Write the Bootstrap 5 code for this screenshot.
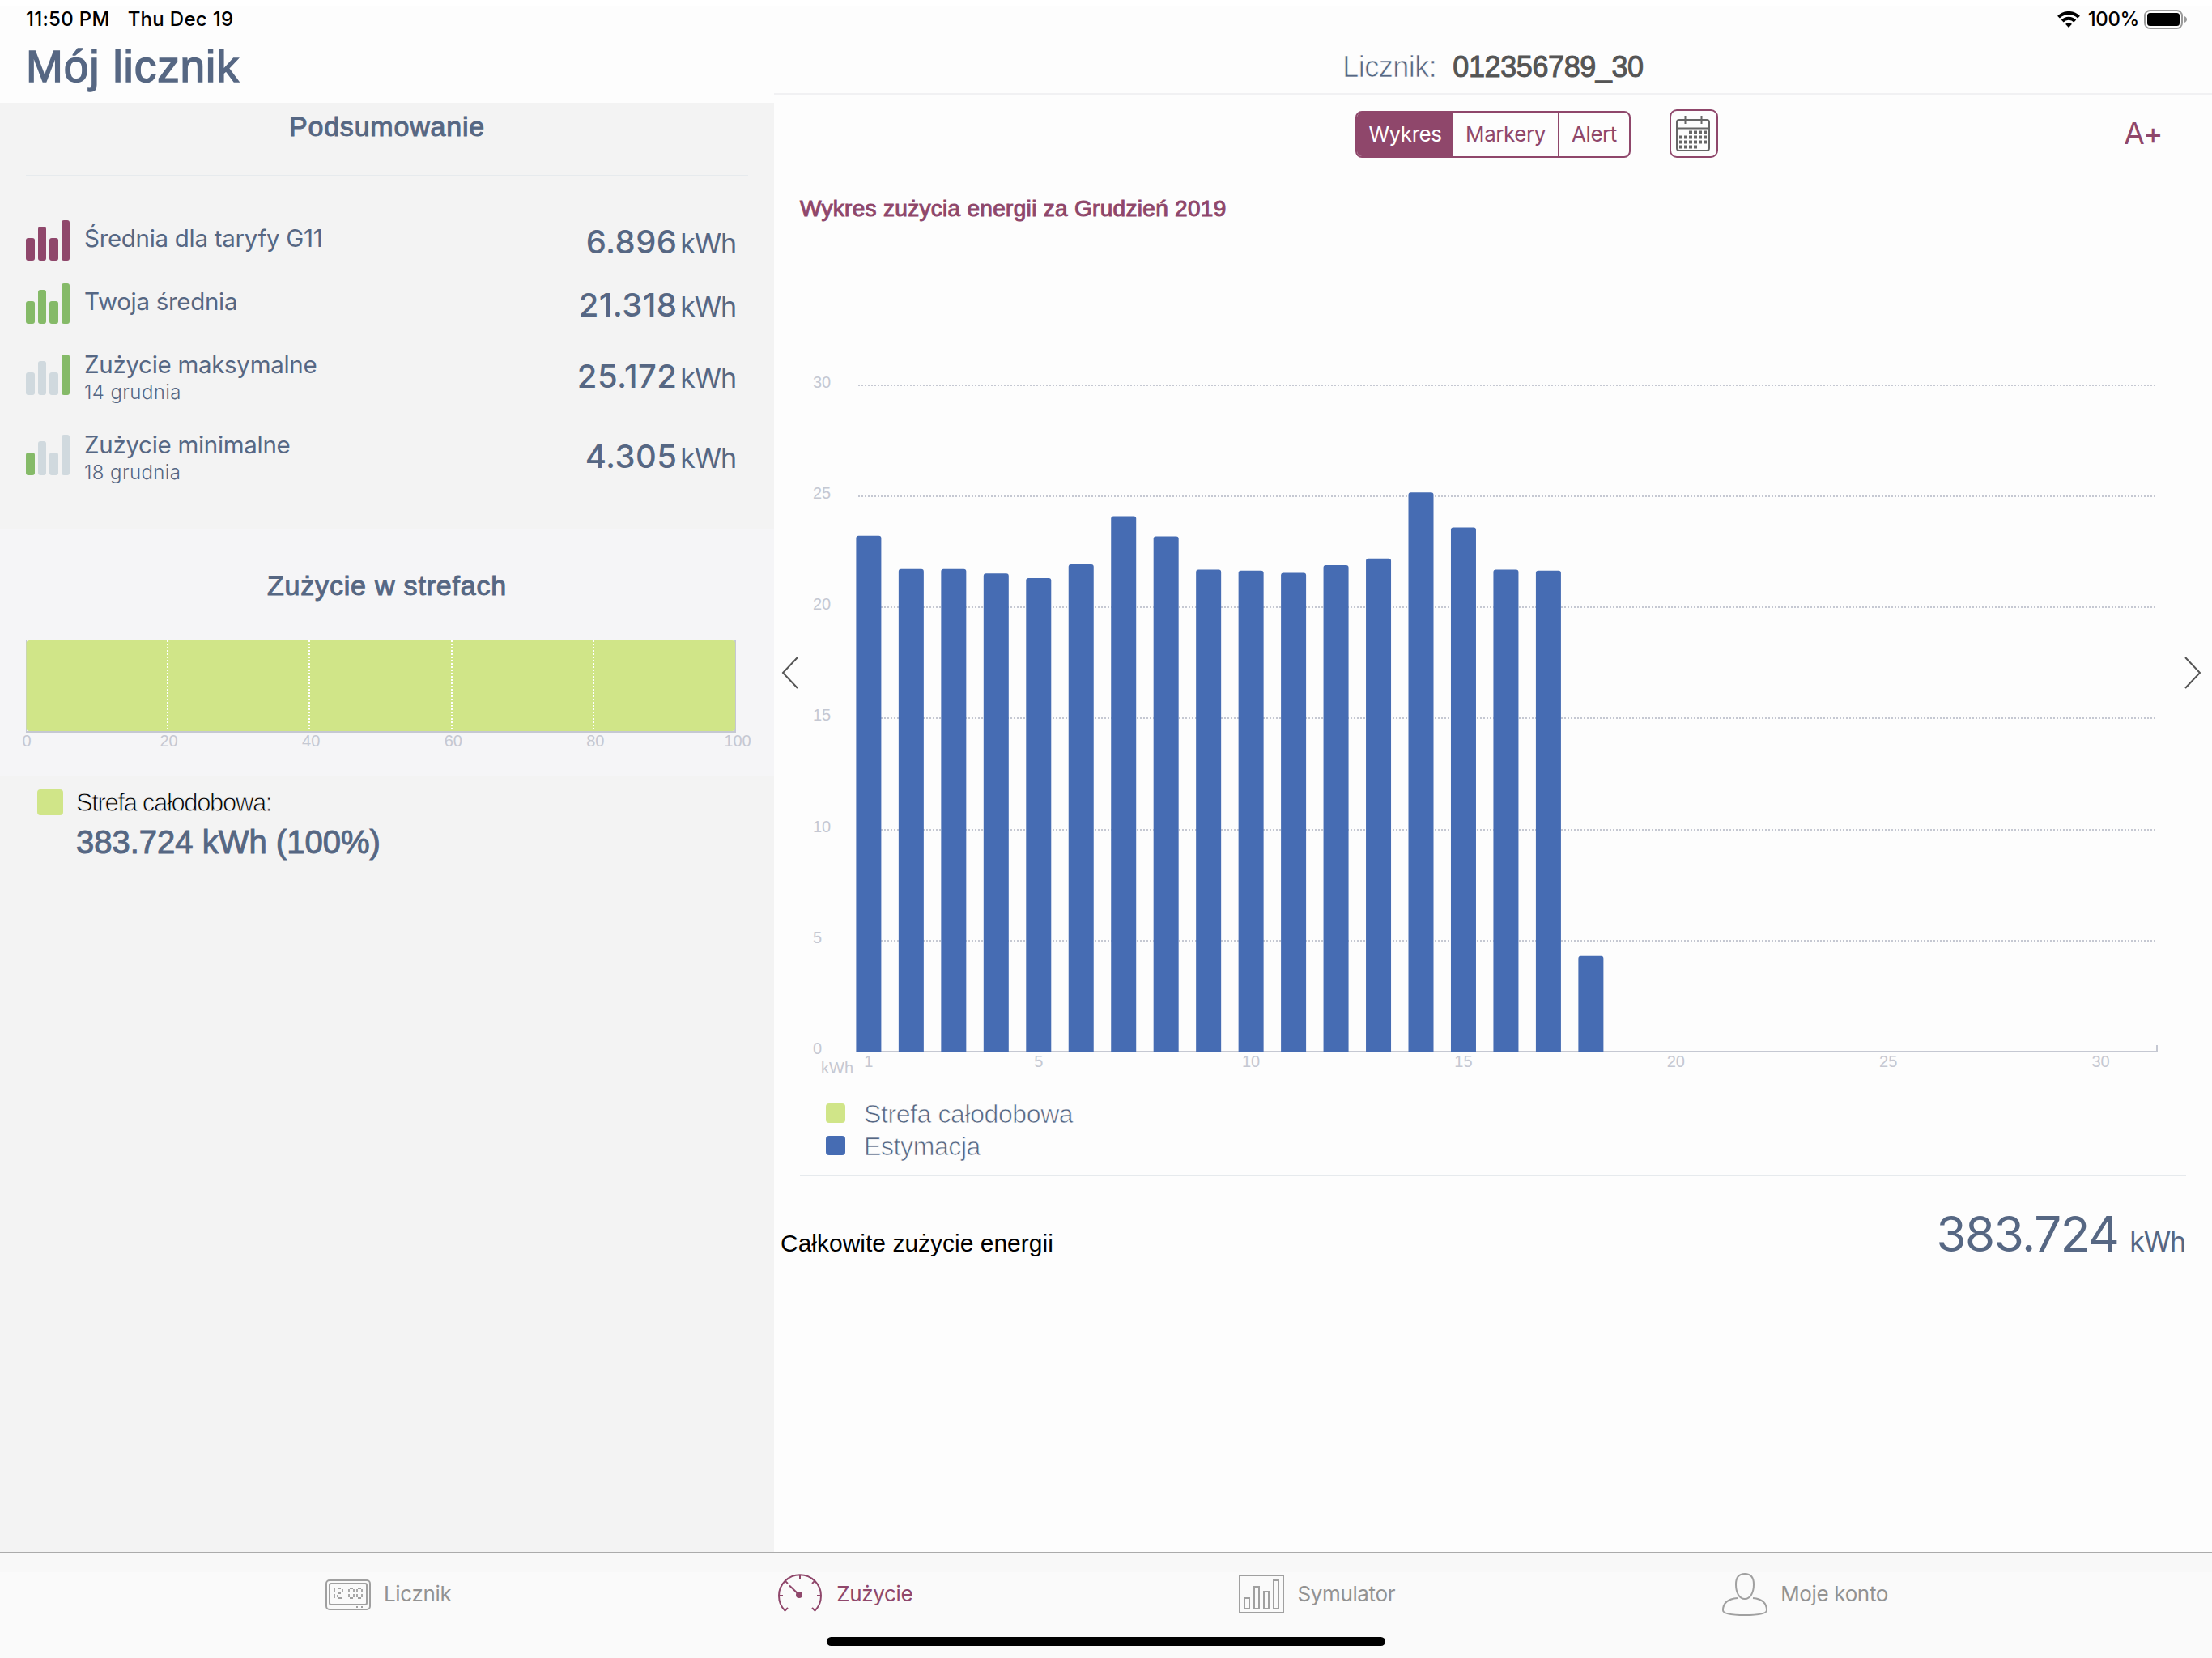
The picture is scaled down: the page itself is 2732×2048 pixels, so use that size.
<!DOCTYPE html>
<html lang="pl">

<head>
    <meta charset="UTF-8">
    <meta name="viewport" content="width=device-width, initial-scale=1.0">
    <title>Mój licznik</title>
    <link href="https://cdn.jsdelivr.net/npm/bootstrap@5.3.0/dist/css/bootstrap.min.css" rel="stylesheet">
    <style>
        body { width: 2732px; height: 2048px; overflow: hidden; background: #fdfdfd; color: #566783; font-family: "Liberation Sans", Arial, sans-serif; }
        .sf { font-family: Inter, sans-serif; }
        .semi { -webkit-text-stroke: 1px currentColor; }
        .thin { -webkit-text-stroke: .7px #fdfdfd; }
        .plum { color: #8f476b; }
        .status-bar { height: 40px; padding: 7px 30px 0 32px; background: linear-gradient(#fff 8px, #fdfdfd 8px); color: #000; font-size: 24px; line-height: 34px; font-weight: 500; letter-spacing: .3px; }
        .side { width: 956px; background: #f3f3f3; }
        .side-head { height: 87px; background: #fdfdfd; padding-left: 32px; font-size: 55px; line-height: 85px; letter-spacing: .9px; }
        .side-head .semi { -webkit-text-stroke-width: 1.5px; }
        .rule { height: 2px; background: #e6eaed; }
        .summary { height: 527px; padding: 0 32px; }
        .sub-title { font-size: 34px; line-height: 58px; text-align: center; letter-spacing: .8px; }
        .stat { height: 50px; margin-right: 15px; }
        .stat-name { font-size: 29.5px; line-height: 44px; padding-left: 18px; letter-spacing: -.3px; }
        .two-line .stat-name { line-height: 24px; }
        .stat-date { font-size: 24px; line-height: 45px; padding-left: 18px; font-weight: 300; letter-spacing: .4px; }
        .stat-val { font-size: 40px; line-height: 53px; font-weight: 500; letter-spacing: .4px; }
        .unit { font-size: 34px; font-weight: 400; letter-spacing: -1.2px; }
        .zones { height: 305px; background: #f5f5f7; padding: 49px 47px 0 32px; }
        .zones .sub-title { line-height: 40px; margin-right: -15px; }
        .zone-axis { margin: 0 -22px 0 -19px; font-size: 20px; line-height: 20px; color: #c5c8d2; }
        .zone-axis span { width: 40px; text-align: center; }
        .swatch { border-radius: 4px; background: #d0e588; }
        .swatch-lg { width: 32px; height: 32px; }
        .swatch-sm { width: 24px; height: 24px; }
        .swatch.est { background: #466cb3; }
        .zone-name { height: 32px; font-size: 31px; line-height: 34px; color: #000; letter-spacing: -1.35px; -webkit-text-stroke: .8px #f3f3f3; }
        .zone-sum { font-size: 40px; line-height: 50px; padding-left: 94px; }
        .meter { height: 77px; padding-top: 10px; font-size: 36px; line-height: 65px; border-bottom: 2px solid #f1f1f3; gap: 20px; }
        .meter-no { color: #555; letter-spacing: -.4px; }
        .toolbar { height: 78px; padding: 18px 61px 0 718px; }
        .seg { height: 58px; width: 340px; border: 2px solid #8f476b; border-radius: 8px; overflow: hidden; font-size: 26px; letter-spacing: -.45px; margin-top: 2px; }
        .seg span { line-height: 54px; text-align: center; }
        .seg .on { background: #8f476b; color: #fff; width: 119px; }
        .seg .mid { width: 131px; border-right: 2px solid #8f476b; }
        .cal { width: 60px; height: 60px; border: 2px solid #8f476b; border-radius: 9px; margin-left: 48px; }
        .font-up { font-size: 37px; line-height: 60px; letter-spacing: -.5px; }
        .chart-title { font-size: 28px; line-height: 40px; margin: 43px 0 0 32px; letter-spacing: .3px; }
        .chart-area { margin: 160px 0 23px; }
        .legend-row { height: 24px; padding-left: 64px; gap: 23px; font-size: 32px; line-height: 26px; letter-spacing: -.4px; }
        .total { margin-top: 31px; padding: 0 33px 0 8px; line-height: 80px; font-size: 30px; }
        .total-label { color: #000; }
        .total-val { font-size: 60px; letter-spacing: -1.4px; }
        .arrow { position: absolute; top: 771px; }
        .tabs { height: 131px; border-top: 1px solid #ababab; background: linear-gradient(#f8f8f8 24px, #fafafa 24px); font-size: 26px; letter-spacing: -.35px; padding-top: 24px; }
        .tabs a { height: 55px; line-height: 54px; color: #929292; text-decoration: none; }
        .tabs a.active { color: #8f476b; }
        .home-bar { width: 690px; height: 11px; border-radius: 6px; background: #000; margin: 25px 0 0 1021px; }
    </style>
</head>

<body class="d-flex flex-column">
    <header class="status-bar sf d-flex">
        <span>11:50 PM</span>
        <span style="margin-left:22px">Thu Dec 19</span>
        <span class="ms-auto d-flex">
            <svg width="28" height="20" viewBox="0 0 28 20" style="margin:7px 10px 0 0" fill="none" stroke="#000" stroke-width="4">
                <path d="M1.500 7.200a17.500 17.500 0 0 1 25 0"/><path d="M6.200 12a11 11 0 0 1 15.600 0"/><path d="M14 20l-4-4.200a6 6 0 0 1 8 0z" fill="#000" stroke="none"/>
            </svg>
            <span style="letter-spacing:-.4px">100%</span>
            <svg width="54" height="24" viewBox="0 0 54 24" style="margin:5px 0 0 6px">
                <rect x="1" y="1" width="46" height="22" rx="6.500" fill="none" stroke="#9a9a9a" stroke-width="2"/>
                <rect x="4" y="4" width="40" height="16" rx="3.500"/><path d="M50 8c4 1.500 4 6.500 0 8z" fill="#9a9a9a"/>
            </svg>
        </span>
    </header>

    <main class="d-flex flex-grow-1">
        <aside class="side d-flex flex-column">
            <div class="side-head"><span class="semi">Mój licznik</span></div>
            <section class="summary">
                <div class="sub-title"><span class="semi">Podsumowanie</span></div>
                <div class="rule" style="margin-top:31px"></div>
                <div id="stats" class="sf"></div>
            </section>
            <section class="zones">
                <div class="sub-title"><span class="semi">Zużycie w strefach</span></div>
                <svg class="d-block" style="margin-top:48px" width="877" height="114">
                    <path d="M0 0V113H876V0" fill="none" stroke="#c5c8d2" stroke-width="2"/>
                    <rect x="0.500" width="875.500" height="112" rx="4" fill="#d0e588"/>
                    <path d="M175 0V112M350 0V112M526 0V112M701 0V112" stroke="#fff" stroke-width="2" stroke-dasharray="2 2"/>
                </svg>
                <div class="zone-axis d-flex justify-content-between"><span>0</span><span>20</span><span>40</span><span>60</span><span>80</span><span>100</span></div>
            </section>
            <section class="pt-3">
                <div class="d-flex" style="padding-left:46px;gap:16px"><span class="swatch swatch-lg"></span><span class="zone-name">Strefa całodobowa:</span></div>
                <div class="zone-sum mt-2"><span class="semi">383.724 kWh (100%)</span></div>
            </section>
        </aside>

        <section class="flex-grow-1 position-relative">
            <div class="meter d-flex justify-content-center">
                <span class="thin" style="letter-spacing:-.5px">Licznik:</span>
                <span class="meter-no semi">012356789_30</span>
            </div>
            <div class="toolbar d-flex">
                <div class="seg sf d-flex plum">
                    <span class="on">Wykres</span>
                    <span class="mid">Markery</span>
                    <span class="flex-fill">Alert</span>
                </div>
                <div class="cal">
                    <svg class="d-block" width="56" height="56" viewBox="0 0 56 56" fill="none" stroke="#666" stroke-width="2">
                        <rect x="7" y="11" width="40" height="38" rx="3"/><path d="M7 21.500H47M17.500 6V16M37.500 6V16"/>
                        <path d="M22 26.500H46M10 32.500H46M10 38.500H46M10 44.500H34" stroke-width="4" stroke-dasharray="4 2"/>
                    </svg>
                </div>
                <span class="font-up ms-auto sf plum">A+</span>
            </div>
            <div class="chart-title plum"><span class="semi">Wykres zużycia energii za Grudzień 2019</span></div>
            <svg id="chart" class="chart-area d-block" width="1776" height="902" font-size="20"></svg>
            <div class="legend-row d-flex"><span class="swatch swatch-sm"></span><span class="thin">Strefa całodobowa</span></div>
            <div class="legend-row d-flex mt-3"><span class="swatch swatch-sm est"></span><span class="thin">Estymacja</span></div>
            <div class="rule" style="margin:24px 32px 0"></div>
            <div class="total d-flex align-items-baseline">
                <span class="total-label">Całkowite zużycie energii</span>
                <span class="total-val ms-auto sf">383.724</span>
                <span class="sf unit" style="margin-left:14px">kWh</span>
            </div>
            <svg class="arrow" style="left:8px" width="24" height="40" fill="none" stroke="#555" stroke-width="2"><path d="M21 1L3 20L21 39"/></svg>
            <svg class="arrow" style="right:12px" width="24" height="40" fill="none" stroke="#555" stroke-width="2"><path d="M3 1L21 20L3 39"/></svg>
        </section>
    </main>

    <footer class="tabs sf">
        <nav class="d-flex p-0">
            <a href="#" class="d-flex" style="margin-left:402px">
                <svg width="56" height="38" viewBox="0 0 56 38" style="margin:9px 16px 0 0" fill="none" stroke="#a0a0a0" stroke-width="2">
                    <rect x="1" y="1" width="54" height="36" rx="4"/><rect x="5" y="5" width="46" height="26" rx="2"/>
                    <path d="M11 11V16M11 18V23M15 11H19M21 12V16M15 17H19M15 19V22M16 23H21M30 11H34M29 12V16M35 12V16M29 18V22M35 18V22M30 23H34M40 11H44M39 12V16M45 12V16M39 18V22M45 18V22M40 23H44" stroke-width="1.800"/>
                    <path d="M38 34H40M44 34H46"/>
                </svg>
                <span>Licznik</span>
            </a>
            <a href="#" class="d-flex active" style="margin-left:404px">
                <svg width="54" height="48" viewBox="0 0 54 48" style="margin:2px 18px 0 0" fill="none" stroke="#8f476b" stroke-width="2">
                    <path d="M8.500 45.500A26 26 0 1 1 45.500 45.500M8.500 45.500L12 42M45.500 45.500L42 42M1 27H6M53 27H48M27 1V6M8.600 8.600L12 12M45.400 8.600L42 12"/>
                    <path d="M14 14.500L26 26"/><circle cx="26" cy="26" r="4" fill="#8f476b" stroke="none"/>
                </svg>
                <span>Zużycie</span>
            </a>
            <a href="#" class="d-flex" style="margin-left:403px">
                <svg width="56" height="48" viewBox="0 0 56 48" style="margin:3px 16px 0 0" fill="none" stroke="#a0a0a0" stroke-width="2">
                    <path d="M1 1H55V47H1zM7 29H13V42H7zM19 15H25V42H19zM31 21H37V42H31zM43 7H49V42H43z"/>
                </svg>
                <span>Symulator</span>
            </a>
            <a href="#" class="d-flex" style="margin-left:404px">
                <svg width="56" height="53" viewBox="0 0 56 53" style="margin:1px 16px 0 0" fill="none" stroke="#a0a0a0" stroke-width="2">
                    <path d="M28 1C20 1 17 6 17 14C17 24 21 32 28 32S39 24 39 14C39 6 36 1 28 1z"/>
                    <path d="M19 31C7 32 1 37 1 46C1 50 10 52 28 52S55 50 55 46C55 37 49 32 38 31"/>
                </svg>
                <span>Moje konto</span>
            </a>
        </nav>
        <div class="home-bar"></div>
    </footer>

    <script src="https://cdn.jsdelivr.net/npm/bootstrap@5.3.0/dist/js/bootstrap.bundle.min.js"></script>
    <script>
        const GREEN = '#85ba68', GREY = '#d0d9de', PLUM = '#8f476b';

        // summary rows
        const stats = [
            { name: 'Średnia dla taryfy G11', value: '6.896', top: 54, colors: [PLUM, PLUM, PLUM, PLUM] },
            { name: 'Twoja średnia', value: '21.318', top: 28, colors: [GREEN, GREEN, GREEN, GREEN] },
            { name: 'Zużycie maksymalne', date: '14 grudnia', value: '25.172', top: 38, colors: [GREY, GREY, GREY, GREEN] },
            { name: 'Zużycie minimalne', date: '18 grudnia', value: '4.305', top: 49, colors: [GREEN, GREY, GREY, GREY] }
        ];
        document.getElementById('stats').innerHTML = stats.map(s => `
            <div class="stat d-flex ${s.date ? 'two-line' : ''}" style="margin-top:${s.top}px">
                <svg class="flex-shrink-0" width="54" height="50">
                    <rect x="0" y="22" width="11" height="28" rx="3" fill="${s.colors[0]}"/>
                    <rect x="15" y="8" width="10" height="42" rx="3" fill="${s.colors[1]}"/>
                    <rect x="29" y="22" width="11" height="28" rx="3" fill="${s.colors[2]}"/>
                    <rect x="44" y="0" width="10" height="50" rx="3" fill="${s.colors[3]}"/>
                </svg>
                <div>
                    <div class="stat-name">${s.name}</div>
                    ${s.date ? `<div class="stat-date">${s.date}</div>` : ''}
                </div>
                <div class="stat-val ms-auto">${s.value}<span class="unit ms-1">kWh</span></div>
            </div>`).join('');

        // daily usage chart, kWh per day of the month
        const days = [23.22, 21.73, 21.73, 21.53, 21.32, 21.94, 24.11, 23.2, 21.7, 21.66, 21.56, 21.9, 22.2, 25.172, 23.6, 21.7, 21.66, 4.305];
        const unit = 27.44, base = 861, left = 101.4, pitch = 52.47;
        let out = '';
        for (let v = 0; v <= 30; v += 5) {
            const y = base - v * unit;
            out += `<text x="48" y="${y + 3}" fill="#c5c8d2">${v}</text>`;
            if (v) out += `<path d="M104 ${Math.round(y)}H1707" stroke="#c5c8d2" stroke-width="2" stroke-dasharray="2 2"/>`;
        }
        out += `<path d="M102 861H1708V853" stroke="#c5c8d2" stroke-width="2" fill="none"/>`;
        days.forEach((v, i) => {
            const x = left + i * pitch, y = base - v * unit;
            out += `<path d="M${x} 862V${y + 3}q0 -3 3 -3h25q3 0 3 3V862z" fill="#466cb3"/>`;
        });
        [1, 5, 10, 15, 20, 25, 30].forEach(d => {
            out += `<text x="${left + 15.5 + (d - 1) * pitch}" y="880" text-anchor="middle" fill="#c5c8d2">${d}</text>`;
        });
        out += `<text x="58" y="888" fill="#c5c8d2">kWh</text>`;
        document.getElementById('chart').innerHTML = out;
    </script>
</body>

</html>
